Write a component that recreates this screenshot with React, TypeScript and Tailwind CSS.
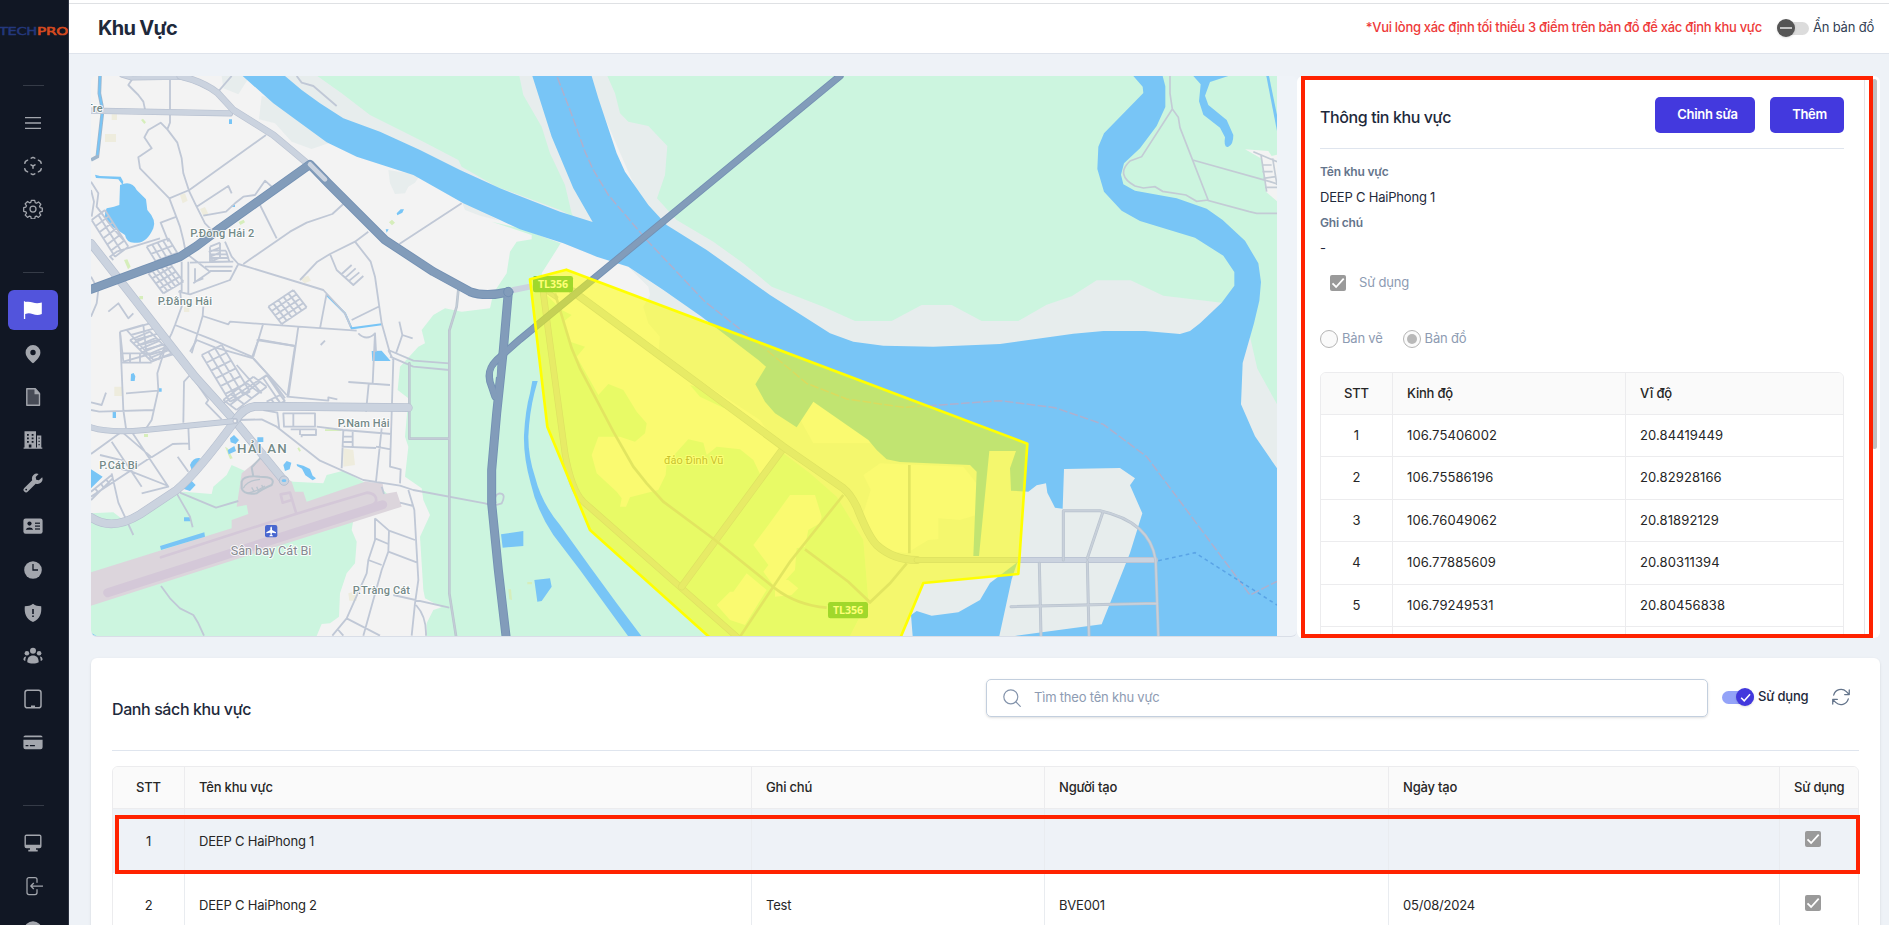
import React from "react";

/* ---------- helpers for the map drawing ---------- */

/** Path of a street block: a parallelogram split into m x n cells. */
function block(x: number, y: number, ux: number, uy: number, vx: number, vy: number, m: number, n: number) {
  let d = "";
  for (let i = 0; i <= m; i++) {
    const t = i / m;
    d += `M${x + ux * t} ${y + uy * t}l${vx} ${vy}`;
  }
  for (let j = 0; j <= n; j++) {
    const t = j / n;
    d += `M${x + vx * t} ${y + vy * t}l${ux} ${uy}`;
  }
  return d;
}

const WATER = "#78c5f6";
const GREEN = "#ccf5df";
const SAND = "#e7eded";
const LAND = "#f3f3f3";

const minorNorth = [
  "M150 48L155 60 145 75 175 105 190 125 195 148",
  "M270 55V188L262 208",
  "M455 48L412 98",
  "M262 208L242 188 205 210 193 232 215 265 175 292 180 325 268 415 300 500 310 540 318 580",
  "M262 208L292 248 305 295 310 340 328 395 345 430 375 490 405 520",
  "M268 415L328 390 558 225",
  "M350 440L445 378 455 400",
  "M370 467L438 455 465 430 490 410 525 405 555 362 575 380",
  "M540 435L590 535",
  "M790 432L757 462 680 488 630 515 490 612",
  "M865 515L825 545 750 582 712 605 660 660",
  "M958 552L1145 430",
  "M435 545L455 590 475 612 730 690 795 760 812 800",
  "M825 545L872 605 885 650 905 790 930 880",
  "M740 700L720 805",
  "M815 780L900 738",
  "M750 582L770 630 820 675 850 648M785 642L815 615M797 652L827 625M808 662L838 637",
  "M475 612L450 660 330 703 295 695",
  "M290 470L242 488 265 545M318 580L390 635 340 670M330 608L460 605M375 620H458M390 633H455",
  "M33 365L55 400 50 440 95 500 130 540M33 390L42 425 35 470",
  "M100 600L90 590 110 575 240 535",
  "M370 740L368 768 445 793 450 785 655 800 830 812",
  "M368 768L335 880M300 690L305 740 285 795 275 820 235 900",
  "M285 795L395 838 515 890 620 1005",
  "M550 790L520 890M535 838L645 858M655 800L625 1010",
  "M650 48L665 68 700 78 770 138",
  "M835 820Q860 845 885 820L888 875M958 785L967 825 998 835M967 825L948 880",
  "M33 650L55 690 50 730 33 770M85 755L115 730 145 775 160 760",
  "M722 855L735 842",
  "M305 605V700M325 605V700M345 625V665L370 655",
  block(200, 560, 65, -25, 40, 65, 4, 3),
  block(205, 640, 60, -35, 45, 60, 5, 4),
  block(390, 560, 30, -12, 0, 45, 1, 3),
  block(388, 572, 50, 0, 10, 33, 1, 3),
  block(565, 740, 75, -50, 40, 52, 5, 4),
  block(35, 480, 40, -30, 70, 110, 2, 6),
  block(120, 815, 70, -20, 10, 90, 1, 1),
  block(140, 810, 70, -20, 80, 90, 1, 6),
];

const minorSouth = [
  "M120 -25L130 210 138 265M125 40H210M125 68H215M150 40V68M180 40V68",
  "M33 187L65 195 78 158M33 210L58 215 220 210M138 160L235 152M260 10L232 100 235 150 215 240 195 270",
  "M330 105L312 125 310 248M335 108L385 180 378 190 425 238",
  "M470 75L545 160M560 105L430 190M330 35L350 0 405 22 520 55 565 105 615 175",
  "M530 0L645 18 622 170 745 182V172L772 178",
  "M535 0L515 55M885 -20L878 130M925 30L940 60 930 380 962 388 960 430",
  "M925 30L1000 62 1108 70M930 50L1000 80 1108 90",
  "M805 126L930 135M866 133L858 215M888 320L932 328M905 265L888 425",
  "M475 240L545 238 590 260 720 362 850 420 960 437 1000 450 1215 490Q1240 500 1265 490 1280 460 1258 460 1240 465 1248 490",
  "M550 210L592 218 598 268M610 220H705V260H612ZM640 220V260M632 268H708V285H665V292M660 268V285",
  "M710 260L790 270 935 282M785 385L790 270M818 272V322M790 290H818M790 306H818M785 320L888 324",
  "M33 342L125 275 215 352M155 275L265 440 185 460M215 352L278 312 327 310M325 260L328 330M33 470L215 350",
  "M95 305L185 440M95 400L115 488 160 585M33 455L95 405M95 380L155 395 265 438M60 345L130 362",
  "M33 480L98 415M45 445L55 458M62 430L72 445M78 418L88 430",
  "M293 350L325 395M290 460L330 530 338 562M300 458L408 503 475 483",
  "M243 738L270 775 300 805 340 825 355 850 372 887",
  "M885 535L927 572 1005 600M885 535V600L865 660 860 700 800 835 757 887M885 595L925 612M927 572L925 635 1012 668M925 635L905 690 850 887M865 660L905 675",
  "M985 450L1003 510 1015 720 1005 790 995 887M960 488L1000 498M912 462L905 440",
  "M940 765L1108 803M1008 795Q1040 830 1038 887M800 835L900 887M775 870L790 887",
  block(365, 45, 60, -30, 85, 140, 3, 6),
  block(430, 180, 90, -70, 40, 30, 4, 2),
  block(560, 105, -10, 10, 55, 80, 1, 1),
  block(560, 185, 40, -20, 15, 18, 3, 1),
  block(150, 0, 60, -25, 65, 65, 1, 7),
];

function MinorRoads() {
  return (
    <g fill="none" stroke="#c0c8d6" strokeWidth="5.5" strokeLinejoin="round">
      <path d={minorNorth.join("")} />
      <path d={minorSouth.join("")} transform="translate(0 840)" />
    </g>
  );
}

function Road({ d, w, edge = "#b7c0d0", fill = "#cbd3df" }: { d: string; w: number; edge?: string; fill?: string }) {
  return (
    <g fill="none" strokeLinecap="round" strokeLinejoin="round">
      <path d={d} stroke={edge} strokeWidth={w} />
      <path d={d} stroke={fill} strokeWidth={w - 4} />
    </g>
  );
}

function MapLabel({ x, y, size = 33, color = "#748a88", weight = 500, spacing = 0, w, children }: {
  x: number; y: number; size?: number; color?: string; weight?: number; spacing?: number; w: number; children: string;
}) {
  return (
    <text x={x} y={y} fontSize={size} fill={color} fontWeight={weight} letterSpacing={spacing} textLength={w}
      stroke="#ffffff" strokeOpacity="0.85" strokeWidth="6" strokeLinejoin="round" paintOrder="stroke"
      fontFamily="Roboto, sans-serif">{children}</text>
  );
}

function RoadShield({ x, y }: { x: number; y: number }) {
  return (
    <g>
      <rect x={x} y={y} width="120" height="49" rx="7" fill="#30ab5e" />
      <text x={x + 60} y={y + 36} fontSize="32" fontWeight="700" fill="#ffffff" textAnchor="middle" textLength="90"
        fontFamily="'Open Sans', sans-serif">TL356</text>
    </g>
  );
}

function RegionMap() {
  return (
    <svg viewBox="33 48 3558 1680" className="block h-[560px] w-[1186px] rounded-l-md" preserveAspectRatio="none">
      <rect x="33" y="48" width="3558" height="1680" fill={LAND} />

      {/* river banks */}
      <g fill={SAND}>
        <path d="M425 48H510L475 103 430 85ZM545 108L537 178 585 190 635 245 695 267 745 250 600 120ZM925 330L930 370 945 402 975 400 985 380 1005 368 1020 345ZM1143 420L1155 450 1200 467 1260 482Z" />
        <path d="M600 48H1370L1545 495 1400 460 1000 300 750 200Z" />
        <path d="M1520 48L1760 600 2060 860 2500 1000 3591 1300V48Z" />
        <path d="M1645 620L1705 680 1710 705 1690 740 1705 790 1740 830 1735 880 2040 1080 2110 1185 2350 1440 2365 1620 2310 1728H3300V1150H2200L2060 900Z" />
      </g>

      {/* vegetation */}
      <g fill={GREEN}>
        <path d="M712 48L785 100 870 165 960 210 1030 245 1135 300 1145 320 1250 380 1440 450 1480 470 1475 460 1455 375 1410 280 1385 200 1330 105 1318 48Z" />
        <path d="M1582 48L1605 100 1620 160 1645 185 1705 198 1762 258 1755 345 1731 415 1790 480 1900 545 1990 610 2075 680 2230 740 2325 783H2435L2525 735H2615L2705 783H2815L2900 734 2975 709 3050 661H3152L3250 707 3425 728 3510 830 3532 926 3591 1033V48Z" />
        <path d="M1235 485L1355 525 1355 538 1310 545 1290 575 1280 640 1240 700 1230 745 1145 755 1095 745 1060 765 1025 810 1035 850 1015 860 960 920 953 990 985 1015 975 1130 985 1160 975 1250 1025 1285 1030 1320 1050 1365 1020 1430 1030 1590 1035 1615 1085 1642 1060 1650 1040 1690V1728H2310L2365 1620 2350 1440 2270 1310 2190 1240 2110 1180 2040 1242 2020 1200 1980 1168 1910 1160 1880 1185 1870 1148 1825 1138 1760 1210 1757 1245 1735 1290 1650 1312 1638 1340 1620 1340 1625 1315 1610 1295 1550 1240 1535 1185 1555 1130 1620 1130 1665 1145 1695 1120 1700 1090 1670 1055 1630 990 1585 972 1555 1005 1490 890 1515 860 1470 845 1450 785 1475 765 1445 750 1400 705 1385 640 1442 550 1320 505Z" />
        <path d="M33 1360L100 1357 130 1380 180 1360 310 1295 395 1302 400 1280 440 1245 455 1215 500 1235 640 1265 730 1270 740 1245 790 1232 850 1265 900 1280 960 1340 820 1380 815 1410 830 1445 825 1510 800 1540 780 1600 777 1670 750 1690 725 1692 710 1728H33Z" />
        <path d="M1830 975L1860 1010 1930 1043 1960 1045 1880 990Z" />
      </g>

      {/* developed land inside the island */}
      <g fill={LAND}>
        <path d="M2130 1305L2205 1305 2225 1370 2220 1390 2185 1410 2175 1460 2150 1465 2145 1530 2090 1590 2050 1535 2065 1515 2020 1455 2065 1395ZM1910 1635L1950 1595 1960 1595 2000 1540 2060 1590 1995 1695 1950 1680ZM2085 1560L2125 1560 2155 1585 2135 1605 2085 1610Z" />
        <path d="M2350 1245L2400 1210 2650 1220 2690 1270V1365L2640 1380 2575 1375V1438L2545 1440 2480 1480 2400 1470 2348 1365 2372 1290Z" />
        <path d="M3495 268L3565 273 3575 288 3591 284V424L3558 395 3545 296Z" />
      </g>

      {/* parks and squares */}
      <path fill="#eeecdd" d="M75 222h33v24H75zM95 163h16v17H95zM300 405l15-5 8 22-15 8zM360 447l15-6 10 20-15 7zM103 980h26v28h-26zM790 1165l30 5 5 45-35 5zM660 655l25-8 8 15-20 8zM805 1600l25-8 0 30-22 0zM312 742h16v14h-16z" />
      <path fill="#d6eebb" d="M183 180l6-4 9 11-5 5zM132 600l10-2 10 22-8 8zM476 486l15-7 4 8-14 8zM927 487l9-8 9 9-9 8zM178 708h11v10h-11zM192 1122h12v9h-12zM735 1108h48v5h-48zM1285 1588h8l3 32-8-2zM1342 1566h14v7h-14zM435 1160l8 5 15 30-8 2zM652 1165l5-3 6 10-5 3z" />

      {/* airport */}
      <path fill="#dcd5dc" d="M33 1537L455 1405V1380L505 1362 500 1335 470 1340 485 1240 545 1190 580 1220 635 1265 645 1295H670L680 1325 855 1265 908 1270 912 1302 950 1295 965 1340 33 1637Z" />
      <g fill="none" stroke="#d4c8d8" strokeLinecap="round" strokeLinejoin="round">
        <path d="M83 1598L908 1334" strokeWidth="27" />
        <path d="M243 1492L640 1364 860 1298Q892 1300 888 1325L870 1345M648 1358L630 1298 602 1303 608 1328 635 1320" strokeWidth="8" />
      </g>

      {/* water */}
      <g fill={WATER}>
        <path d="M615 48L665 90 720 130 790 175 900 215 1020 270 1140 330 1260 385 1440 455 1538 486 1480 385 1415 230 1357 48H1535L1555 115 1610 280 1635 335 1705 435 1760 495 1880 570 2070 705 2250 820 2320 845 2410 857 2560 860 2760 852 2980 821 3070 813H3195L3300 822 3330 813 3360 790 3425 728 3463 677V636L3430 587 3345 533 3180 483 3125 452 3072 395 3052 327 3055 260 3072 220 3190 99 3188 80 3160 48H3248L3256 79V141L3230 198 3180 265 3132 310 3123 344 3130 373 3165 392 3290 415 3380 446 3428 480 3495 542 3535 610 3543 666 3538 722 3522 790 3488 909 3483 1033 3525 1129 3591 1225V1728H2805L3065 1693 3150 1479 3187 1360 3150 1276 3165 1255 3120 1224 2952 1227 2948 1346 2925 1343 2902 1298 2898 1270 2870 1276 2845 1295 2793 1292 2790 1225 2808 1173H2728L2697 1488H2680L2690 1235 2670 1215 2460 1206 2420 1198 2390 1170 2365 1140 2200 1025 2150 1102 2085 1060 2055 1025 2026 973 2058 920 2035 900 1865 770 1750 690 1645 620 1550 590 1450 550 1320 508 1260 480 1150 430 1000 345 830 290 740 247 580 130 488 48Z" />
        <path d="M2493 1665L2510 1653 2555 1667 2635 1657 2700 1620 2730 1569 2812 1507 2795 1558 2758 1728H2498Z" />
        <path d="M3340 48H3445L3390 66 3375 107 3385 135 3440 180 3460 225Q3460 255 3445 260T3435 232L3420 203 3370 164 3357 124 3362 73Z" />
        <path d="M3559 48H3567L3591 165V213Z" />
        <path d="M120 375Q155 360 170 390L198 418 202 450Q230 480 220 505 200 550 170 548 140 552 135 525L90 495Q65 470 80 445 105 440 118 435Z" />
        <path d="M45 344L48 354 115 358 128 375 130 365 122 350 60 348ZM447 178h9v14h-9zM455 435h10v6h-10zM950 460l12-12h10l-5 10-15 8zM917 508h9l-6 10zM875 873L905 872 932 903H877ZM153 942l8-3 5 10-2 14h-12zM236 985h9v10h-9zM98 1056h10v18H98zM33 1228L68 1250 33 1285ZM330 1215Q340 1190 362 1195L335 1230ZM305 1285L330 1258 347 1275 330 1293ZM450 1135l12-10 15 15-10 12-15-5zM443 1170l20-12 5 15-22 10zM532 1132h18v14h-18zM610 1215l10-12 14 5-5 20-14 5zM650 1212l20 5 20 10 8 20 10 8-10 6-22-15-10-20-15-8zM312 1372h18v12h-18zM240 1458L373 1417 375 1430 243 1470ZM1263 1423L1330 1413V1458L1268 1463ZM1363 1560L1410 1555 1415 1580 1385 1623 1372 1625ZM33 1718L50 1728H33Z" />
      </g>
      <g fill="none" stroke={WATER}>
        <path d="M60 48L58 100 68 150 52 290 33 300" stroke="#9fb6cc" strokeWidth="11" />
        <path d="M60 48L58 100 68 150 52 285" strokeWidth="6" />
        <path d="M740 705L795 760 815 805 905 793" strokeWidth="6" />
      </g>
      {/* creek beside the island */}
      <path fill={WATER} d="M1357 963H1373L1363 1000Q1348 1060 1345 1130 1345 1190 1365 1250 1385 1330 1440 1395L1530 1520 1610 1630 1684 1728H1644L1500 1530 1420 1425Q1370 1350 1352 1270 1330 1190 1332 1125 1336 1050 1350 1000Z" />

      <MinorRoads />
      <g fill="none" stroke="#b9c4ce" strokeWidth="6">
        <path d="M545 1190L515 1222 520 1250M485 1265Q490 1245 540 1250 590 1250 575 1275 540 1290 530 1300 490 1305 485 1285Z" />
        <path d="M490 1285Q500 1262 540 1258M500 1300Q530 1295 555 1278M515 1282l8 14M530 1280l6 14M545 1275l6 12" strokeWidth="4" />
      </g>

      {/* local roads in the east */}
      <g fill="none" stroke="#c3cbd5" strokeWidth="5">
        <path d="M3270 48V100L3277 147 3295 172 3300 203 3385 422 3508 455 3530 460H3591M3277 147L3185 290 3150 303Q3105 345 3165 378L3190 384 3225 380 3248 394 3318 405 3350 424 3385 420M3338 300L3570 365 3591 372" />
        <path d="M3520 275L3591 305M3543 285L3560 395M3578 295L3591 375M3545 315H3575M3547 335H3578M3550 355L3588 350M3555 382H3591" />
      </g>
      <g fill="none" stroke="#aeb0ce" strokeWidth="4.5" strokeDasharray="26 7">
        <path d="M1432 52L1470 150 1515 275 1540 330 1585 405 1700 540 1875 725 2060 870 2180 970 2300 1017 2470 1042 2580 1035 2760 1022 2925 1043 3070 1093 3200 1190 3510 1605 3591 1564" />
      </g>
      <path d="M3235 1502L3345 1478 3591 1635" fill="none" stroke="#5aa4e6" strokeWidth="4.5" strokeDasharray="11 10" />

      {/* arterial roads */}
      <Road w={8} d="M1135 690L1130 740 1108 812V1600L1128 1728M988 910V1136H1108" edge="#b9c4ce" fill="#c3ccd6" />
      <Road w={15} d="M125 45L155 54 300 52Q340 55 412 98" />
      <Road w={19} d="M33 152L450 160" />
      <Road w={21} d="M300 48Q370 65 412 98L460 150 580 225 640 275 735 355" edge="#bac3d2" />
      <Road w={26} d="M33 550L345 950 465 1083 612 1262" />
      <Road w={26} d="M33 1372Q95 1415 180 1363L290 1290Q350 1240 465 1083 490 1043 525 1039H620L985 1043" />
      <Road w={18} d="M33 1102Q90 1120 195 1110L465 1083" />
      <circle cx="465" cy="1083" r="6" fill={LAND} stroke="#b7c0d0" strokeWidth="3" />
      <circle cx="612" cy="1262" r="14" fill="#cbd3df" stroke="#b7c0d0" strokeWidth="3" />
      <ellipse cx="612" cy="1262" rx="7" ry="4" fill={WATER} />

      {/* island roads */}
      <Road w={14} d="M1428 712L1395 690" />
      <Road w={20} d="M1390 700L1410 850 1455 1180Q1475 1290 1510 1325L1970 1730" />
      <Road w={22} d="M2112 1162L1805 1580" />
      <g fill="none" stroke="#bfc7d2" strokeWidth="8">
        <path d="M1425 700L1475 865 1500 925 1600 1115 1660 1220 1700 1270 1750 1325 1905 1440 2085 1585Q2150 1635 2240 1643M2290 1305L2130 1505 1980 1730M2175 1468L2305 1565 2370 1627 2430 1570 2480 1510M2488 1215V1480" />
      </g>
      <Road w={24} d="M1480 695L2110 1160 2290 1285Q2310 1300 2330 1340 2365 1430 2390 1455 2440 1500 2510 1500" />
      <Road w={18} d="M2510 1500H3225" />
      <Road w={9} d="M2950 1500V1352H3060Q3210 1385 3227 1500L3235 1728M3068 1358L3022 1495M3022 1505L3027 1728M2878 1510L2883 1728M2793 1640L3232 1630" edge="#b9c3ce" fill="#c8d0da" />

      {/* highways */}
      <g fill="none" strokeLinecap="round" strokeLinejoin="round">
        {[["#7390b3", 27], ["#829cba", 22]].map(([c, w]) => (
          <g key={c as string} stroke={c as string} strokeWidth={w as number}>
            <path d="M33 688L190 630 300 590 350 558 420 505 690 313 745 370 915 540 1060 635 1170 695Q1215 712 1285 696" />
            <path d="M1285 696L1270 870 1250 1060 1235 1230V1330L1255 1530 1278 1728" />
            <path d="M2280 48L1320 838 1250 900Q1215 935 1235 980L1245 1010" strokeWidth={(w as number) - 5} />
          </g>
        ))}
        <path d="M690 313L735 358" stroke="#cbd3df" strokeWidth="14" />
        <path d="M1300 690L1350 680" stroke="#cbd3df" strokeWidth="18" />
        <circle cx="1285" cy="696" r="14" fill="#829cba" stroke="#7390b3" strokeWidth="3" />
        <path d="M1252 915Q1235 930 1240 955L1250 950Z" fill={GREEN} />
      </g>

      <RoadShield x={1359} y={648} />
      <RoadShield x={2244} y={1626} />

      <MapLabel x={18} y={155} w={50}>Tre</MapLabel>
      <MapLabel x={331} y={532} w={192}>P.Đông Hải 2</MapLabel>
      <MapLabel x={233} y={735} w={163}>P.Đằng Hải</MapLabel>
      <MapLabel x={773} y={1102} w={156}>P.Nam Hải</MapLabel>
      <MapLabel x={58} y={1226} w={115}>P.Cát Bi</MapLabel>
      <MapLabel x={818} y={1602} w={172}>P.Tràng Cát</MapLabel>
      <MapLabel x={471} y={1178} size={40} w={150} spacing={1}>HẢI AN</MapLabel>
      <MapLabel x={452} y={1484} size={38} w={242} weight={400} color="#84888f">Sân bay Cát Bi</MapLabel>
      <MapLabel x={1752} y={1212} w={178} weight={400} color="#85796a">đảo Đình Vũ</MapLabel>

      <rect x="555" y="1395" width="37" height="37" rx="6" fill="#4967cf" />
      <path d="M573.500 1399l2.500 4v7l12 7v3l-12-2-1 6 4 3v2h-11v-2l4-3-1-6-12 2v-3l12-7v-7z" fill="#ffffff" />

      {/* selected region */}
      <path d="M1350 658L1459 629 2842 1151 2815 1542 2530 1569 2450 1760H1920L1530 1410 1402 1100Z" fill="#ffff00" fillOpacity="0.54" stroke="#ffff00" strokeWidth="8" strokeLinejoin="round" />
    </svg>
  );
}

/* ---------- sidebar ---------- */

const G = "#a3a6ad";

function SideIcon({ children, w = 20 }: { children: React.ReactNode; w?: number }) {
  return (
    <svg viewBox="0 0 20 20" width={w} height={w} fill={G} stroke="none">
      {children}
    </svg>
  );
}

const toolIcons = [
  <SideIcon key="menu"><path d="M2 4.700h16M2 10h16M2 15.300h16" stroke={G} strokeWidth="1.300" /></SideIcon>,
  <SideIcon key="scan">
    <g fill="none" stroke={G} strokeWidth="1.500" strokeLinecap="round" strokeLinejoin="round">
      <path d="M8.200 2.200L10 1.300l1.800.9M4.600 4.200L2.500 5.300 1.800 7.300M15.400 4.200l2.100 1.100.7 2M1.800 12.700l.7 2 2.100 1.100M18.200 12.700l-.7 2-2.100 1.100M8.200 17.800l1.800.9 1.800-.9M8 8.800l2 1.200 2-1.200M10 10v2.300" />
    </g>
  </SideIcon>,
  <SideIcon key="gear">
    <path fill="none" stroke={G} strokeWidth="1.250" strokeLinejoin="round" d="M8.300 1.300h3.400l.5 2.300 1.300.6 2-1.300 2.300 2.400-1.300 2 .6 1.300 2.200.4v3.300l-2.200.5-.6 1.300 1.300 2-2.400 2.300-1.900-1.300-1.300.5-.5 2.300H8.300l-.5-2.300-1.300-.5-2 1.300-2.300-2.400 1.300-1.900-.6-1.300-2.200-.5V8.600l2.200-.5.6-1.300-1.300-2 2.400-2.300 1.900 1.300 1.300-.5z" />
    <circle cx="10" cy="10" r="3" fill="none" stroke={G} strokeWidth="1.250" />
  </SideIcon>,
];

const mainIcons = [
  <svg key="flag" viewBox="0 0 20 20" width="20" height="20">
    <path fill="#ffffff" d="M.9 1.200h1.300v.9c3.200-1 5.300-.2 7.600.5 2.700.8 5 1.100 9-.1V14c-3.500 1.500-6.300.9-9.300-.1-2.500-.8-4.600-1-7.300.1v5H.9z" />
  </svg>,
  <SideIcon key="pin"><path fillRule="evenodd" d="M10 1a7.400 7.400 0 0 0-7.400 7.400c0 4.400 4.500 8.500 7.400 10.900 2.900-2.400 7.400-6.500 7.400-10.900A7.400 7.400 0 0 0 10 1zm0 4.800a2.700 2.700 0 1 1 0 5.400 2.700 2.700 0 0 1 0-5.400z" /></SideIcon>,
  <SideIcon key="file">
    <path d="M3.800 1.800h8.500l4.200 4.600v11.800H3.800z" fill="#474b56" stroke={G} strokeWidth="1.400" strokeLinejoin="round" />
    <path d="M11.500 1.200v6h5.800z" />
  </SideIcon>,
  <SideIcon key="building">
    <path fillRule="evenodd" d="M1.500 1.200H13v16.200h1V5.500h4.300v11.900h1v1.400H.6v-1.400h.9zM4 4v1.700h1.800V4zm4.700 0v1.700h1.800V4zM4 7.500v1.700h1.800V7.500zm4.700 0v1.700h1.800V7.500zM4 11v1.700h1.800V11zm4.700 0v1.700h1.800V11zM5.800 14.500v2.900h2.600v-2.900zM15.500 7.500v1.300h1.200V7.500zm0 3.200V12h1.200v-1.300zm0 3.200v1.300h1.200v-1.300z" />
  </SideIcon>,
  <SideIcon key="wrench"><path d="M15.600.9a5 5 0 0 0-6.400 6.300L1.300 14.900a2.500 2.500 0 0 0 3.600 3.600l7.800-7.800a5 5 0 0 0 6.500-6.400l-3.300 3-2.700-.6-.5-2.600z" /><circle cx="3.200" cy="16.600" r="0.900" fill="#111724" /></SideIcon>,
  <SideIcon key="id">
    <rect x=".4" y="2.500" width="19.200" height="15.200" rx="2.200" />
    <g fill="#111724"><circle cx="6.500" cy="7.600" r="2.100" /><path d="M2.800 13.800a3.800 3 0 0 1 7.400 0z" /><rect x="12" y="6.600" width="5" height="1.200" /><rect x="12" y="9.500" width="5" height="1.200" /><rect x="12" y="12.400" width="5" height="1.200" /></g>
  </SideIcon>,
  <SideIcon key="clock"><circle cx="10" cy="10" r="8.800" /><path d="M10 4v6h5" fill="none" stroke="#111724" strokeWidth="1.300" /></SideIcon>,
  <SideIcon key="shield"><path d="M10 .8c2.300 1.800 5 2.500 8.200 2.500.6 6.800-1 12.900-8.200 15.700C2.800 16.200 1.200 10.100 1.800 3.300 5 3.300 7.700 2.600 10 .8z" /><path d="M10 6v5M10 12.500v1.500" stroke="#111724" strokeWidth="1.600" /></SideIcon>,
  <SideIcon key="users">
    <circle cx="10" cy="4.700" r="3" /><circle cx="3.900" cy="7.300" r="2.300" /><circle cx="16.100" cy="7.300" r="2.300" />
    <path d="M4.300 16.200c0-4.600 2.200-6.700 5.700-6.700s5.700 2.100 5.700 6.700c-2.500 1.800-9 1.800-11.400 0zM.4 13.500c.2-2 1-2.800 2.800-3-.6 1.200-.9 2.600-.9 4.500-.8-.2-1.600-.6-1.900-1.500zM19.600 13.500c-.2-2-1-2.800-2.800-3 .6 1.200.9 2.600.9 4.500.8-.2 1.600-.6 1.900-1.500z" />
  </SideIcon>,
  <SideIcon key="tablet"><rect x="2" y="1.200" width="16" height="17.600" rx="2.400" fill="none" stroke={G} strokeWidth="1.500" /><path d="M8 16.500h4v1.500H8z" /></SideIcon>,
  <SideIcon key="card">
    <path d="M.4 5.200A2 2 0 0 1 2.200 3.500h15.600a2 2 0 0 1 1.800 1.700zM.4 7.700h19.200v7.600a2 2 0 0 1-1.900 1.900H2.300a2 2 0 0 1-1.900-1.900z" />
    <path d="M2.600 13.600h2.800M6.900 13.600h5" stroke="#111724" strokeWidth="1.300" />
  </SideIcon>,
];

const footerIcons = [
  <SideIcon key="screen">
    <path fillRule="evenodd" d="M3.500 1.500h13a2 2 0 0 1 2 2v9.700a2 2 0 0 1-2 2H13v1.600h1.700v1.800H5.300v-1.800H7v-1.600H3.500a2 2 0 0 1-2-2V3.500a2 2 0 0 1 2-2zm-.6 1.400v8.800h14.200V2.900z" />
  </SideIcon>,
  <SideIcon key="exit">
    <path fill="none" stroke={G} strokeWidth="1.250" strokeLinecap="round" strokeLinejoin="round" d="M14 6.300V3.500a2 2 0 0 0-2-2H6a2 2 0 0 0-2 2v13a2 2 0 0 0 2 2h6a2 2 0 0 0 2-2v-2.800M19.500 10H8M10.500 7.300L7.800 10l2.700 2.700" />
  </SideIcon>,
  <SideIcon key="account"><circle cx="10" cy="10" r="8.800" /></SideIcon>,
];

function Divider({ className }: { className: string }) {
  return <div className={`mx-auto h-px w-[21px] shrink-0 bg-[#353b47] ${className}`} />;
}

function IconGroup({ icons, active, className }: { icons: React.ReactNode[]; active?: number; className: string }) {
  return (
    <nav className={`flex shrink-0 flex-col items-center gap-[3.200px] ${className}`}>
      {icons.map((icon, i) => (
        <a key={i} className={`flex h-10 w-[50px] shrink-0 items-center justify-center rounded-md ${i === active ? "bg-[#5254dc]" : ""}`}>
          {icon}
        </a>
      ))}
    </nav>
  );
}

function Sidebar() {
  return (
    <aside className="flex h-full w-[69px] shrink-0 flex-col overflow-hidden border-r border-[#2c3240] bg-[#111724] pr-[2px]">
      <svg viewBox="0 0 69 20" className="mt-[21px] h-5 w-[69px] shrink-0" fontFamily="'DejaVu Sans', sans-serif" fontSize="11">
        <text x="-1" y="14" textLength="38" lengthAdjust="spacingAndGlyphs" fill="#24387d" stroke="#24387d" strokeWidth=".5">TECH</text>
        <text x="37" y="14" textLength="31" lengthAdjust="spacingAndGlyphs" fill="#d64a1f" stroke="#d64a1f" strokeWidth=".6">PRO</text>
      </svg>
      <Divider className="mt-11" />
      <IconGroup icons={toolIcons} className="mt-[17px]" />
      <Divider className="mt-[43px]" />
      <IconGroup icons={mainIcons} active={0} className="mt-[17px]" />
      <Divider className="mt-[43px]" />
      <IconGroup icons={footerIcons} className="mt-[17px]" />
    </aside>
  );
}

/* ---------- controls ---------- */

function Checkbox() {
  return (
    <span className="flex size-4 items-center justify-center rounded-[2px] bg-[#9a9a9a]">
      <svg viewBox="0 0 16 16" width="16" height="16" fill="none" stroke="#ffffff" strokeWidth="1.800">
        <path d="M2.500 8.300l3.600 3.700 7.600-8.300" />
      </svg>
    </span>
  );
}

function Toggle({ on }: { on?: boolean }) {
  return (
    <span className={`flex h-[13px] w-8 shrink-0 items-center rounded-full ${on ? "justify-end bg-[#94a3f8]" : "bg-[#dcdcdc]"}`}>
      <span className={`flex size-[18px] shrink-0 items-center justify-center rounded-full shadow ${on ? "bg-[#4338dd]" : "bg-[#555555]"}`}>
        {on ? (
          <svg viewBox="0 0 12 12" width="13" height="13" fill="none" stroke="#ffffff" strokeWidth="1.400"><path d="M2 6.300l2.800 2.800L10.200 3" /></svg>
        ) : (
          <span className="h-[2px] w-3 bg-[#c4c4c4]" />
        )}
      </span>
    </span>
  );
}

function Radio({ label, checked }: { label: string; checked?: boolean }) {
  return (
    <label className="flex items-center gap-1">
      <span className="flex size-[18px] items-center justify-center rounded-full border border-[#b5b5b5] bg-[#fafafa]">
        {checked && <span className="size-[10px] rounded-full bg-[#b8b8b8]" />}
      </span>
      <span className="text-[13px] text-[#8d9bb2]">{label}</span>
    </label>
  );
}

/* ---------- area details ---------- */

const points = [
  ["1", "106.75406002", "20.84419449"],
  ["2", "106.75586196", "20.82928166"],
  ["3", "106.76049062", "20.81892129"],
  ["4", "106.77885609", "20.80311394"],
  ["5", "106.79249531", "20.80456838"],
  ["6", "", ""],
];

function AreaDetails() {
  return (
    <section className="relative h-[562px] w-[583px] rounded-md bg-white">
      <div className="h-full w-[568px] overflow-hidden border-r border-[#e4e4e8] pl-[23px] pr-5">
        <div className="flex h-[73px] items-start border-b border-[#dfe5ee] pt-[21px]">
          <h2 className="flex-1 pt-[8px] text-[16px] font-medium leading-6 tracking-[-.4px] text-[#1e293b]">Thông tin khu vực</h2>
          <button className="h-9 w-[100px] rounded-[5px] bg-[#4339de] pl-[5px] text-[13px] font-semibold tracking-[-.3px] text-white">Chỉnh sửa</button>
          <button className="ml-[15px] h-9 w-[74px] rounded-[5px] bg-[#4339de] pl-[5px] text-[13px] font-semibold tracking-[-.3px] text-white">Thêm</button>
        </div>
        <dl className="pt-[10px] text-[13px] leading-[25.500px]">
          <dt className="text-[12px] font-semibold text-[#64748b]">Tên khu vực</dt>
          <dd className="text-[#1e293b]">DEEP C HaiPhong 1</dd>
          <dt className="text-[12px] font-semibold text-[#64748b]">Ghi chú</dt>
          <dd className="text-[#1e293b]">-</dd>
        </dl>
        <label className="mt-[9px] flex h-[25px] items-center gap-[13px] pl-[10px] text-[13px] text-[#8d9bb2]">
          <Checkbox />
          Sử dụng
        </label>
        <div className="mt-[35px] flex h-[18px] items-center gap-[20px]">
          <Radio label="Bản vẽ" />
          <Radio label="Bản đồ" checked />
        </div>
        <div className="mt-[24px] overflow-hidden rounded-t-md border border-[#ececee] text-[13px] text-[#262626]">
          <div className="grid h-[42px] grid-cols-[72px_233px_1fr] items-center divide-x divide-[#ececee] border-b border-[#ececee] bg-[#fafafa] font-medium *:flex *:h-full *:items-center">
            <span className="justify-center">STT</span>
            <span className="pl-[14px]">Kinh độ</span>
            <span className="pl-[14px]">Vĩ độ</span>
          </div>
          {points.map(([n, lng, lat]) => (
            <div key={n} className="grid h-[42.400px] grid-cols-[72px_233px_1fr] divide-x divide-[#ececee] border-b border-[#ececee] tracking-[.1px] *:flex *:h-full *:items-center">
              <span className="justify-center">{n}</span>
              <span className="pl-[14px]">{lng}</span>
              <span className="pl-[14px]">{lat}</span>
            </div>
          ))}
        </div>
      </div>
      <div className="absolute right-[3.500px] top-[3px] h-[370px] w-[5px] rounded bg-[#c1c1c1]" />
      <div className="absolute left-1 top-0 h-[562px] w-[572px] border-4 border-[#ff2200]" />
    </section>
  );
}

/* ---------- list of areas ---------- */

const areas = [
  { n: "1", name: "DEEP C HaiPhong 1", note: "", author: "", date: "", selected: true },
  { n: "2", name: "DEEP C HaiPhong 2", note: "Test", author: "BVE001", date: "05/08/2024", selected: false },
];

function AreaList() {
  return (
    <section className="relative h-[300px] w-[1789px] shrink-0 rounded-md bg-white px-[21px] shadow-sm">
      <div className="flex h-[93px] items-start border-b border-[#dfe5ee] pt-[21px]">
        <h2 className="flex-1 pt-[18px] text-[16px] font-medium leading-6 tracking-[-.4px] text-[#1e293b]">Danh sách khu vực</h2>
        <div className="flex h-[38px] w-[722px] items-center gap-[13px] rounded-[5px] border border-[#c3cfde] pl-4 shadow-sm">
          <svg viewBox="0 0 18 18" width="18" height="18" fill="none" stroke="#8494ac" strokeWidth="1.200" strokeLinecap="round">
            <circle cx="7.800" cy="7.800" r="7" /><path d="M13 13l4.300 4.300" />
          </svg>
          <span className="text-[13px] text-[#8d9bb2]">Tìm theo tên khu vực</span>
        </div>
        <div className="ml-[14px] flex h-9 items-center text-[13px] font-medium text-[#1e293b]">
          <Toggle on />
          <span className="ml-1 w-[74px]">Sử dụng</span>
          <svg viewBox="0 0 24 24" width="22" height="22" fill="none" stroke="#64748b" strokeWidth="1.400" strokeLinecap="round" strokeLinejoin="round" className="-mx-[2px]">
            <path d="M16.023 9.348h4.992V4.356M2.985 19.644v-4.992h4.992M2.985 14.652l3.181 3.183a8.250 8.250 0 0 0 13.803-3.700M4.031 9.865a8.250 8.250 0 0 1 13.803-3.700l3.181 3.182" />
          </svg>
        </div>
        <span className="w-[9px]" />
      </div>
      <div className="mt-[15px] overflow-hidden rounded-t-md border border-[#ececee] text-[13px] text-[#262626]">
        <div className="grid h-[42px] grid-cols-[72px_567px_293px_344px_391px_1fr] divide-x divide-[#ececee] border-b border-[#ececee] bg-[#fafafa] font-medium *:flex *:items-center *:pl-[14px] *:pt-px">
          <span>
            <span className="-ml-[14px] w-[72px] text-center">STT</span>
          </span>
          <span>Tên khu vực</span>
          <span>Ghi chú</span>
          <span>Người tạo</span>
          <span>Ngày tạo</span>
          <span>Sử dụng</span>
        </div>
        {areas.map((a) => (
          <div key={a.n} className={`grid h-16 grid-cols-[72px_567px_293px_344px_391px_1fr] divide-x divide-[#e9ecf0] ${a.selected ? "bg-[#eef2f7]" : "bg-white"} *:flex *:items-center *:pl-[14px] *:pt-[2px]`}>
            <span>
              <span className="-ml-[14px] w-[72px] text-center">{a.n}</span>
            </span>
            <span>{a.name}</span>
            <span>{a.note}</span>
            <span>{a.author}</span>
            <span>{a.date}</span>
            <span>
              <span className="mb-[7px] ml-[11px]"><Checkbox /></span>
            </span>
          </div>
        ))}
      </div>
      <div className="absolute left-6 top-[157px] h-[59px] w-[1745px] border-4 border-[#ff2200]" />
    </section>
  );
}

export default function App() {
  return (
    <div className="flex h-[925px] w-[1889px] overflow-hidden bg-[#eef2f7] font-['Inter',sans-serif] leading-normal tracking-[-.2px]">
      <Sidebar />
      <main className="flex flex-1 flex-col overflow-hidden">
        <div className="h-1 shrink-0 border-b border-[#dfe1e4] bg-white" />
        <header className="flex h-[50px] shrink-0 items-center border-b border-[#dfe4ec] bg-white pb-px pl-[29px] pr-4">
          <h1 className="flex-1 text-[20px] font-bold tracking-[-0.700px] text-[#1e293b]">Khu Vực</h1>
          <p className="text-[13px] font-medium tracking-[-.3px] text-[#ee3a3a]">*Vui lòng xác định tối thiểu 3 điểm trên bản đồ để xác định khu vực</p>
          <div className="ml-[15px] flex items-center gap-1 text-[13px] text-[#334155]">
            <Toggle />
            <span className="w-[60px] whitespace-nowrap">Ẩn bản đồ</span>
          </div>
        </header>
        <div className="flex flex-col gap-5 pl-[22px] pt-[22px]">
          <div className="flex h-[562px] shrink-0">
            <div className="h-[561px] w-[1206px] rounded-md border-b border-[#d9dee7] bg-[#eff3f8]">
              <RegionMap />
            </div>
            <AreaDetails />
          </div>
          <AreaList />
        </div>
      </main>
    </div>
  );
}
